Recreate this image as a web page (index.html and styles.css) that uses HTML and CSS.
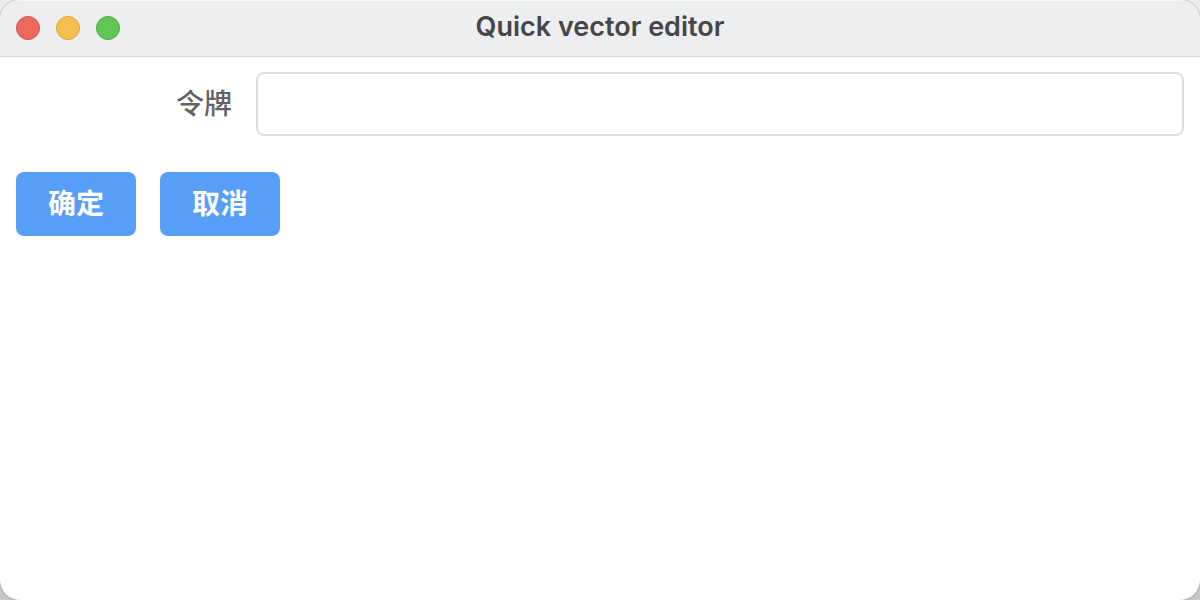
FILE: index.html
```html
<!DOCTYPE html>
<html lang="zh-CN">
<head>
<meta charset="utf-8">
<title>Quick vector editor</title>
<link rel="stylesheet" href="styles.css">
</head>
<body>
<div class="window">
  <header class="titlebar">
    <div class="controls">
      <button class="dot close" type="button" aria-label="Close"></button>
      <button class="dot minimize" type="button" aria-label="Minimize"></button>
      <button class="dot zoom" type="button" aria-label="Zoom"></button>
    </div>
    <h1 class="title">Quick vector editor</h1>
  </header>
  <form class="form">
    <div class="field">
      <label class="label" for="token">令牌</label>
      <input class="input" id="token" type="text">
    </div>
    <div class="actions">
      <button class="button" type="button">确定</button>
      <button class="button" type="button">取消</button>
    </div>
  </form>
</div>
</body>
</html>
```

FILE: styles.css
```css
* { box-sizing: border-box; }

body {
  margin: 0;
  background: linear-gradient(#ececec 20px, #c8c8c8);
  font-family: Inter, "Noto Sans CJK SC", sans-serif;
}

.window {
  min-height: 100vh;
  background: #fff;
  border-radius: 20px;
  box-shadow: 0 0 2px #777;
  overflow: hidden;
}

.titlebar {
  display: grid;
  grid-template-columns: 1fr auto 1fr;
  align-items: center;
  height: 57px;
  padding: 0 16px;
  background: #eceef0;
  border-bottom: 1px solid #d6d6d7;
  box-shadow: inset 0 1px #f6f7f8;
}

.controls { display: flex; gap: 16px; }

.dot {
  width: 24px;
  height: 24px;
  padding: 0;
  border: 1px solid;
  border-radius: 50%;
}

.close { background: #ee6a5f; border-color: #d55448; }
.minimize { background: #f5bf4f; border-color: #d8a13c; }
.zoom { background: #62c655; border-color: #50a73e; }

.title {
  margin: 0;
  padding-bottom: 2px;
  color: #454647;
  font-size: 27px;
  font-weight: 600;
  line-height: 32px;
}

.form { padding: 15px 16px; }

.field {
  display: grid;
  grid-template-columns: 216px 1fr;
  column-gap: 24px;
  align-items: center;
}

.label {
  color: #606266;
  font-size: 28px;
  font-weight: 500;
  line-height: 40px;
  text-align: right;
}

.input {
  width: 100%;
  height: 64px;
  padding: 0 22px;
  border: 2px solid #dddde2;
  border-radius: 8px;
  background: #fff;
  color: #606266;
  font: inherit;
  font-size: 28px;
}

.actions {
  display: flex;
  gap: 24px;
  margin-top: 36px;
}

.button {
  height: 64px;
  padding: 0 32px;
  border: 0;
  border-radius: 8px;
  background: #579ef8;
  color: #fff;
  font: inherit;
  font-size: 28px;
  font-weight: 700;
  line-height: 40px;
}
```
